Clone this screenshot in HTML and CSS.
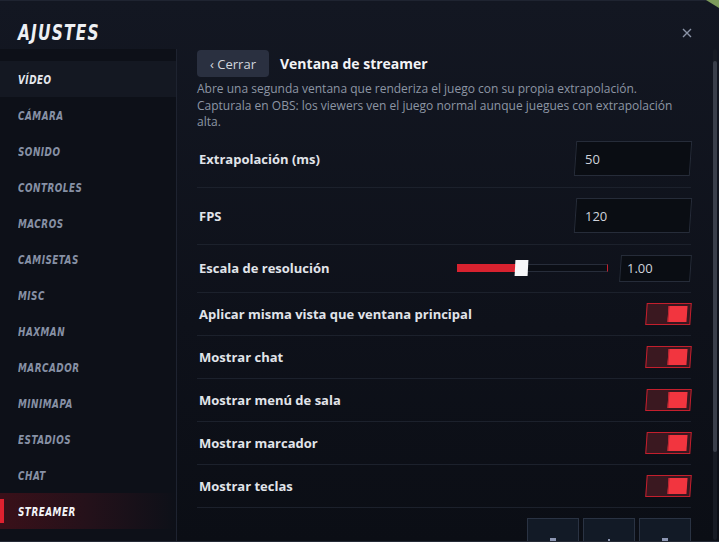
FILE: index.html
```html
<!doctype html>
<html lang="es">
  <head>
    <meta charset="UTF-8" />
    <meta name="viewport" content="width=device-width, initial-scale=1.0" />
    <title>Ajustes | Streamer</title>
    <link rel="stylesheet" href="styles.css">
  </head>
  <body>
    <div class="modal">
      <header class="modal-head">
        <h1>AJUSTES</h1>
        <button class="close" type="button" aria-label="Cerrar">
          <svg width="10" height="10" viewBox="0 0 10 10">
            <path d="M1 1 L9 9 M9 1 L1 9" stroke="#8a93a6" stroke-width="1.4" fill="none" />
          </svg>
        </button>
      </header>

      <div class="modal-body">
        <nav class="side">
          <a class="side-item hover"><span>VÍDEO</span></a>
          <a class="side-item"><span>CÁMARA</span></a>
          <a class="side-item"><span>SONIDO</span></a>
          <a class="side-item"><span>CONTROLES</span></a>
          <a class="side-item"><span>MACROS</span></a>
          <a class="side-item"><span>CAMISETAS</span></a>
          <a class="side-item"><span>MISC</span></a>
          <a class="side-item"><span>HAXMAN</span></a>
          <a class="side-item"><span>MARCADOR</span></a>
          <a class="side-item"><span>MINIMAPA</span></a>
          <a class="side-item"><span>ESTADIOS</span></a>
          <a class="side-item"><span>CHAT</span></a>
          <a class="side-item active"><span>STREAMER</span></a>
        </nav>

        <main class="pane">
          <div class="pane-head">
            <button class="back" type="button">‹ Cerrar</button>
            <h2>Ventana de streamer</h2>
          </div>
          <p class="desc">Abre una segunda ventana que renderiza el juego con su propia extrapolación. Capturala en OBS: los viewers ven el juego normal aunque juegues con extrapolación alta.</p>

          <div class="row tall">
            <span class="label">Extrapolación (ms)</span>
            <div class="field"><span>50</span></div>
          </div>
          <div class="row tall">
            <span class="label">FPS</span>
            <div class="field"><span>120</span></div>
          </div>
          <div class="row mid">
            <span class="label">Escala de resolución</span>
            <div class="range">
              <div class="track">
                <div class="fill" style="width: 40%"></div>
                <div class="knob"></div>
              </div>
              <div class="field small"><span>1.00</span></div>
            </div>
          </div>
          <div class="row">
            <span class="label">Aplicar misma vista que ventana principal</span>
            <div class="toggle on"><div class="dot"></div></div>
          </div>
          <div class="row">
            <span class="label">Mostrar chat</span>
            <div class="toggle on"><div class="dot"></div></div>
          </div>
          <div class="row">
            <span class="label">Mostrar menú de sala</span>
            <div class="toggle on"><div class="dot"></div></div>
          </div>
          <div class="row">
            <span class="label">Mostrar marcador</span>
            <div class="toggle on"><div class="dot"></div></div>
          </div>
          <div class="row">
            <span class="label">Mostrar teclas</span>
            <div class="toggle on"><div class="dot"></div></div>
          </div>

          <div class="actions">
            <button class="pos" type="button">
              <svg width="12" height="12" viewBox="0 0 12 12"><rect x="3" y="0" width="6" height="3" fill="#8c96b2" /><rect x="3" y="5" width="6" height="7" fill="#5c6580" /></svg>
            </button>
            <button class="pos" type="button">
              <svg width="12" height="12" viewBox="0 0 12 12"><rect x="5" y="1" width="2" height="2" fill="#8c96b2" /><rect x="3" y="5" width="6" height="6" fill="#5c6580" /></svg>
            </button>
            <button class="pos" type="button">
              <svg width="12" height="12" viewBox="0 0 12 12"><rect x="3" y="0" width="6" height="3" fill="#8c96b2" /><rect x="3" y="5" width="6" height="7" fill="#5c6580" /></svg>
            </button>
          </div>
        </main>

        <div class="scroll"><div class="thumb"></div></div>
      </div>
    </div>
  </body>
</html>
```

FILE: styles.css
```css
body {
  margin: 0;
  padding: 0;
  background-color: #7d9b5b;
  font-family: "Open Sans", "Noto Sans", sans-serif;
  overflow: hidden;
}

.modal {
  width: 719px;
  height: 542px;
  box-sizing: border-box;
  display: flex;
  flex-direction: column;
  background: linear-gradient(180deg, #131722 0%, #0e111a 60%, #0b0e15 100%);
  border-top: 1px solid #1f2431;
  border-bottom: 1px solid #252a36;
  clip-path: polygon(0 0, 706px 0, 719px 8px, 100% 100%, 0 100%);
}

.modal-head {
  height: 48px;
  flex: none;
  display: flex;
  align-items: center;
  justify-content: space-between;
  padding: 0 27px 0 18px;
}

.modal-head h1 {
  margin: 14px 0 0;
  font-family: "DejaVu Sans Condensed", "DejaVu Sans", sans-serif;
  font-style: italic;
  font-weight: bold;
  font-size: 22px;
  letter-spacing: 1.5px;
  color: #eef0f4;
  transform: scaleX(0.78);
  transform-origin: left center;
}

.close {
  margin-top: 16px;
  background: none;
  border: none;
  padding: 0;
  display: flex;
  cursor: pointer;
}

.modal-body {
  flex: 1;
  display: flex;
  min-height: 0;
}

/* sidebar */

.side {
  width: 176px;
  flex: none;
  padding-top: 12px;
  background-color: #0d1018;
  border-right: 1px solid #1e2330;
  display: flex;
  flex-direction: column;
}

.side-item {
  height: 36px;
  display: flex;
  align-items: center;
  padding: 1px 0 0 18px;
  box-sizing: border-box;
  font-family: "DejaVu Sans Condensed", "DejaVu Sans", sans-serif;
  font-style: italic;
  font-weight: bold;
  font-size: 12px;
  letter-spacing: 0.6px;
  color: #8791a5;
  position: relative;
}

.side-item span {
  display: inline-block;
  transform: scaleX(0.82);
  transform-origin: left center;
}

.side-item.hover {
  background-color: #141822;
  color: #e4e7ed;
}

.side-item.active {
  color: #f4f5f8;
  background: linear-gradient(90deg, #3a1019 0%, #24111a 50%, rgba(20, 14, 22, 0) 100%);
}

.side-item.active::before {
  content: "";
  position: absolute;
  left: 0;
  top: 6px;
  bottom: 6px;
  width: 4px;
  background-color: #e0212f;
}

/* content pane */

.pane {
  flex: 1;
  min-width: 0;
  overflow: hidden;
  padding: 1px 22px 0 20px;
}

.pane-head {
  display: flex;
  align-items: center;
  gap: 11px;
}

.back {
  height: 27px;
  width: 72px;
  border: none;
  border-radius: 4px;
  background-color: #2a3040;
  color: #d2d6de;
  font-family: "Open Sans", sans-serif;
  font-size: 13px;
  padding: 0;
  cursor: pointer;
}

.pane-head h2 {
  margin: 0;
  font-size: 14px;
  font-weight: bold;
  color: #f2f3f6;
}

.desc {
  margin: 4px 0 0;
  font-size: 12px;
  line-height: 16.5px;
  color: #8d95a4;
}

.row {
  min-height: 42px;
  display: flex;
  align-items: center;
  justify-content: space-between;
  border-bottom: 1px solid #1c212c;
  padding-left: 2px;
}

.row.tall {
  min-height: 56px;
}

.row.mid {
  min-height: 47px;
}

.label {
  font-size: 13px;
  font-weight: bold;
  color: #e1e4ea;
}

.field {
  width: 116px;
  height: 35px;
  box-sizing: border-box;
  display: flex;
  align-items: center;
  padding-left: 10px;
  position: relative;
  font-size: 13px;
  color: #cfd3db;
}

.field::before {
  content: "";
  position: absolute;
  inset: 0;
  background-color: #0a0d13;
  border: 1px solid #262c39;
  transform: skewX(-4deg);
  z-index: -1;
}

.field span {
  position: relative;
}

.field.small {
  width: 71px;
  height: 27px;
  padding-left: 7px;
}

.range {
  display: flex;
  align-items: center;
  gap: 12px;
}

.track {
  width: 151px;
  height: 8px;
  box-sizing: border-box;
  border: 1px solid #272d3a;
  border-right: 1px solid #c4202e;
  background-color: #0b0e15;
  position: relative;
}

.fill {
  height: 8px;
  margin: -1px 0 0 -1px;
  background-color: #d8222f;
}

.knob {
  position: absolute;
  left: 57px;
  top: -5px;
  width: 13px;
  height: 16px;
  background-color: #f6f6f8;
  transform: skewX(-3deg);
}

.toggle {
  width: 45px;
  height: 22px;
  box-sizing: border-box;
  border: 1px solid #c41f2d;
  background-color: #3a1820;
  transform: skewX(-4deg);
  display: flex;
  justify-content: flex-end;
  align-items: flex-start;
  padding: 2px 3px 0 0;
}

.dot {
  width: 18px;
  height: 16px;
  background-color: #f2353f;
  border-left: 1px solid #b52633;
}

.actions {
  display: flex;
  justify-content: flex-end;
  gap: 4px;
  margin-top: 10px;
}

.pos {
  width: 52px;
  height: 52px;
  box-sizing: border-box;
  border: 1px solid #2a3343;
  background-color: #121a26;
  display: flex;
  align-items: center;
  justify-content: center;
  padding: 0;
}

.scroll {
  width: 4px;
  flex: none;
  margin: 0 2px 1px 0;
  background-color: #171b24;
  border-radius: 3px;
}

.thumb {
  margin-top: 12px;
  height: 391px;
  border-radius: 2px;
  background-color: #3a3f4b;
}
```
